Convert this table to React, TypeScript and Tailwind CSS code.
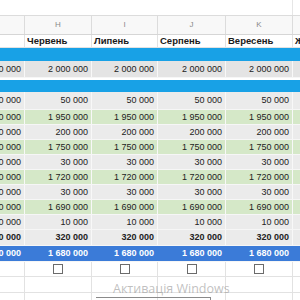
const widths = ['w-[25px]', 'w-[67px]', 'w-[66px]', 'w-[68px]', 'w-[67px]']
const letters = ['', 'H', 'I', 'J', 'K']
const months = ['', 'Червень', 'Липень', 'Серпень', 'Вересень']

type Row = { value: string; bg: string; h: string; bold?: boolean; white?: boolean }

const rows: Row[] = [
    { value: '50 000', bg: 'bg-[#ebebeb]', h: 'h-[18px]' },
    { value: '1 950 000', bg: 'bg-[#d5e8c8]', h: 'h-[15px]' },
    { value: '200 000', bg: 'bg-[#ebebeb]', h: 'h-[15px]' },
    { value: '1 750 000', bg: 'bg-[#d5e8c8]', h: 'h-[15px]' },
    { value: '30 000', bg: 'bg-[#ebebeb]', h: 'h-[15px]' },
    { value: '1 720 000', bg: 'bg-[#d5e8c8]', h: 'h-[15px]' },
    { value: '30 000', bg: 'bg-[#ebebeb]', h: 'h-[15px]' },
    { value: '1 690 000', bg: 'bg-[#d5e8c8]', h: 'h-[15px]' },
    { value: '10 000', bg: 'bg-[#ebebeb]', h: 'h-[15px]' },
    { value: '320 000', bg: 'bg-[#ebebeb]', h: 'h-[16px]', bold: true },
    { value: '1 680 000', bg: 'bg-[#3b7bd8]', h: 'h-[16px]', bold: true, white: true },
]

function NumberRow({ row }: { row: Row }) {
    return (
        <div className={`flex ${row.h} ${row.bg} border-b border-[#f6f6f6]`}>
            {widths.map((w, i) => (
                <div
                    key={i}
                    className={`${w} flex items-center justify-end overflow-hidden whitespace-nowrap pr-[3px] border-r ${row.white ? 'border-[#3b7bd8]' : 'border-[#f8f8f8]'}`}
                >
                    <span className={`${row.bold ? 'font-bold' : ''} ${row.white ? 'text-white' : 'text-[#222]'}`}>{row.value}</span>
                </div>
            ))}
            <div className="flex-1" />
        </div>
    )
}

function BlueBar({ h }: { h: string }) {
    return <div className={`${h} bg-[#18a1e6]`} />
}

function GridRow({ h, children }: { h: string; children?: (i: number) => React.ReactNode }) {
    return (
        <div className={`flex ${h} border-b border-[#e2e2e2] bg-white`}>
            {widths.map((w, i) => (
                <div key={i} className={`${w} flex items-center justify-center border-r border-[#e2e2e2]`}>
                    {children ? children(i) : null}
                </div>
            ))}
            <div className="flex-1" />
        </div>
    )
}

export default function App() {
    return (
        <div className="relative w-[300px] h-[300px] overflow-hidden bg-white text-[9px] leading-none" style={{ fontFamily: '"Liberation Sans", Arial, sans-serif' }}>
            {/* top strip */}
            <div className="flex h-[16px] border-b border-[#dcdcdc]">
                <div className="w-[293px] border-r border-[#e6e6e6]" />
                <div className="flex-1" />
            </div>

            {/* column letters */}
            <div className="flex h-[19px] bg-[#f8f8f8] border-b border-[#d6d6d6]">
                {widths.map((w, i) => (
                    <div key={i} className={`${w} flex items-center justify-center border-r border-[#dcdcdc] text-[8px] text-[#8a8a8a]`}>
                        {letters[i]}
                    </div>
                ))}
                <div className="flex-1" />
            </div>

            {/* months */}
            <div className="flex h-[13px] border-b border-[#e2e2e2]">
                {widths.map((w, i) => (
                    <div key={i} className={`${w} flex items-center pl-[2px] border-r border-[#e2e2e2] font-bold text-[9.5px] text-[#1a1a1a] whitespace-nowrap overflow-hidden`}>
                        {months[i]}
                    </div>
                ))}
                <div className="flex-1 flex items-center pl-[2px] font-bold text-[9.5px] text-[#1a1a1a] overflow-hidden">Ж</div>
            </div>

            <BlueBar h="h-[13px]" />

            <div className="border-b-2 border-white">
                <NumberRow row={{ value: '2 000 000', bg: 'bg-[#e4e4e4]', h: 'h-[17px]' }} />
            </div>

            <BlueBar h="h-[12px]" />

            {rows.map((r, i) => (
                <NumberRow key={i} row={r} />
            ))}

            <GridRow h="h-[15px]">
                {(i) => (i > 0 ? <div className="w-[10px] h-[10px] border-[1.5px] border-[#6b6b6b] bg-white" /> : null)}
            </GridRow>
            <GridRow h="h-[16px]" />
            <GridRow h="h-[16px]" />

            {/* windows activation watermark */}
            <div className="absolute left-[113px] top-[283px] text-[12.5px] leading-none text-[rgba(130,130,130,0.5)] whitespace-nowrap" style={{ fontFamily: '"Open Sans", "Liberation Sans", sans-serif' }}>
                Активація Windows
            </div>
            <div className="absolute left-[96px] top-[297px] w-[115px] h-[10px] border-t border-r border-[#8a8a8a]" />
        </div>
    )
}
